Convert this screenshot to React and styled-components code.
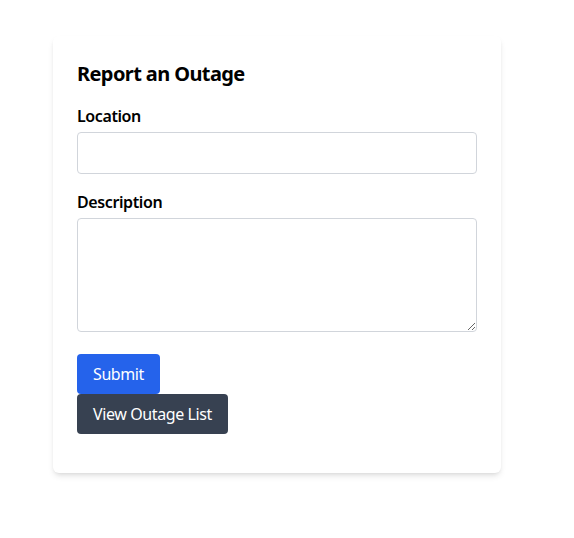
import React from "react";
import styled, { createGlobalStyle } from "styled-components";

const GlobalStyle = createGlobalStyle`
  * {
    box-sizing: border-box;
  }
  body {
    margin: 0;
    background: #fff;
    font-family: "Noto Sans", "Open Sans", sans-serif;
    letter-spacing: -0.025em;
    color: #000;
  }
`;

export default function App() {
  return (
    <>
      <GlobalStyle />
      <Page>
        <Card>
          <Title>Report an Outage</Title>
          <Field>
            <Label htmlFor="location">Location</Label>
            <Input id="location" type="text" />
          </Field>
          <Field>
            <Label htmlFor="description">Description</Label>
            <TextArea id="description" rows={4} />
          </Field>
          <Actions>
            <Button $variant="primary">Submit</Button>
            <Button $variant="dark">View Outage List</Button>
          </Actions>
        </Card>
      </Page>
    </>
  );
}

const Page = styled.div`
  width: 100%;
  padding: 36px 0 40px 53px;
`;

const Card = styled.div`
  width: 448px;
  background-color: #fff;
  border-radius: 6px;
  padding: 24px 24px 39px;
  box-shadow: 0 4px 6px -1px rgba(0, 0, 0, 0.1), 0 2px 4px -2px rgba(0, 0, 0, 0.1);
`;

const Title = styled.h2`
  margin: 0 0 16px;
  font-size: 20px;
  line-height: 28px;
  font-weight: 700;
  letter-spacing: -0.03em;
`;

const Field = styled.div`
  display: flex;
  flex-direction: column;
  margin-bottom: 16px;
`;

const Label = styled.label`
  font-size: 16px;
  line-height: 24px;
  font-weight: 600;
  margin-bottom: 4px;
`;

const Input = styled.input`
  width: 100%;
  height: 42px;
  padding: 8px 12px;
  border: 1px solid #d1d5db;
  border-radius: 4px;
  font: inherit;
  outline: none;
`;

const TextArea = styled.textarea`
  width: 100%;
  height: 114px;
  padding: 8px 12px;
  border: 1px solid #d1d5db;
  border-radius: 4px;
  font: inherit;
  outline: none;
`;

const Actions = styled.div`
  display: flex;
  flex-direction: column;
  align-items: flex-start;
  padding-top: 6px;
`;

const Button = styled.button`
  height: 40px;
  padding: 0 16px;
  border: none;
  border-radius: 4px;
  font-family: inherit;
  font-size: 16px;
  line-height: 24px;
  letter-spacing: inherit;
  color: #fff;
  cursor: pointer;
  background-color: ${(p) => (p.$variant === "primary" ? "#2563eb" : "#374151")};
`;
